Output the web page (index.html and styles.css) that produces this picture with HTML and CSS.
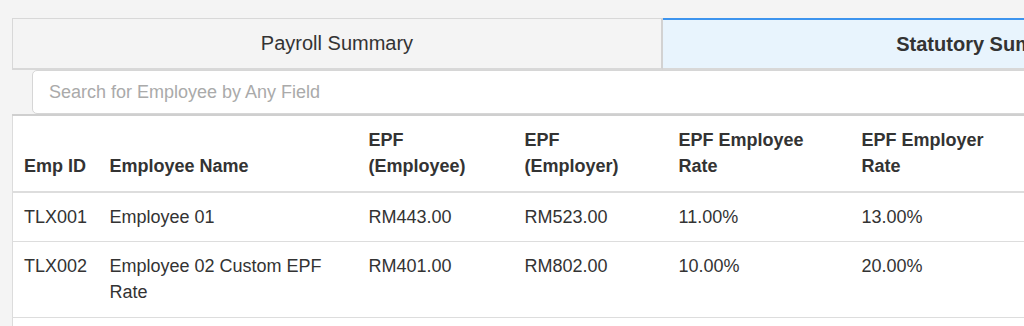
FILE: index.html
```html
<!DOCTYPE html>
<html lang="en">
<head>
    <meta charset="UTF-8">
    <meta name="viewport" content="width=device-width, initial-scale=1.0">
    <title>Payroll Reports</title>
    <link rel="stylesheet" href="styles.css">
</head>
<body>

    <!-- Report Tabs -->
    <div class="report">
        <div class="tabs">
            <div class="tab">Payroll Summary</div>
            <div class="tab active">Statutory Summary</div>
        </div>

        <!-- Employee Search -->
        <div class="search-row">
            <input class="search" type="text" placeholder="Search for Employee by Any Field">
        </div>

        <!-- Statutory Table -->
        <table class="statutory">
            <colgroup>
                <col class="col-id">
                <col class="col-name">
                <col class="col-epf">
                <col class="col-epf2">
                <col class="col-rate">
                <col class="col-rate2">
            </colgroup>
            <thead>
                <tr>
                    <th>Emp ID</th>
                    <th>Employee Name</th>
                    <th>EPF (Employee)</th>
                    <th>EPF (Employer)</th>
                    <th>EPF Employee Rate</th>
                    <th>EPF Employer Rate</th>
                </tr>
            </thead>
            <tbody>
                <tr>
                    <td>TLX001</td>
                    <td>Employee 01</td>
                    <td>RM443.00</td>
                    <td>RM523.00</td>
                    <td>11.00%</td>
                    <td>13.00%</td>
                </tr>
                <tr>
                    <td>TLX002</td>
                    <td>Employee 02 Custom EPF Rate</td>
                    <td>RM401.00</td>
                    <td>RM802.00</td>
                    <td>10.00%</td>
                    <td>20.00%</td>
                </tr>
            </tbody>
            <tfoot>
                <tr>
                    <td></td>
                    <td></td>
                    <td></td>
                    <td></td>
                    <td></td>
                    <td></td>
                </tr>
            </tfoot>
        </table>
    </div>

</body>
</html>
```

FILE: styles.css
```css
body {
    background-color: #f4f4f4;
    font-family: "Liberation Sans", Arial, Helvetica, sans-serif;
    color: #333;
    margin: 0;
    padding: 18px 0 0 12px;
    overflow: hidden;
}
.report {
    width: 1302px;
}
.tabs {
    display: flex;
}
.tab {
    box-sizing: border-box;
    width: 651px;
    height: 52px;
    display: flex;
    align-items: center;
    justify-content: center;
    font-size: 20px;
    background-color: #f4f4f4;
    border-top: 1px solid #d8d8d8;
    border-bottom: 2px solid #d8d8d8;
}
.tab:first-child {
    border-left: 1px solid #d8d8d8;
    border-right: 2px solid #d2d2d2;
}
.tab.active {
    background-color: #e8f4fd;
    border-top: 2px solid #3d94ee;
    font-weight: bold;
}
.search-row {
    padding-left: 20px;
}
.search {
    box-sizing: border-box;
    display: block;
    width: 100%;
    height: 44px;
    padding: 0 16px;
    font-family: inherit;
    font-size: 18px;
    color: #333;
    background-color: #fff;
    border: 1px solid #d6d6d6;
    border-radius: 5px;
    outline: none;
}
.search::placeholder {
    color: #aaa;
}
.statutory {
    width: 100%;
    table-layout: fixed;
    border-collapse: collapse;
    background-color: #fff;
    border-top: 2px solid #cfcfcf;
    border-left: 1px solid #dcdcdc;
    font-size: 18px;
    line-height: 26px;
}
.col-id { width: 86px; }
.col-name { width: 259px; }
.col-epf { width: 156px; }
.col-epf2 { width: 154px; }
.col-rate { width: 183px; }
.col-rate2 { width: 464px; }
.statutory th,
.statutory td {
    text-align: left;
    vertical-align: top;
    padding: 11px 11px 11.5px;
}
.statutory th {
    vertical-align: bottom;
    font-weight: bold;
    border-bottom: 2px solid #dddddd;
}
.statutory th:last-child {
    padding-right: 320px;
}
.statutory td {
    border-bottom: 1px solid #dddddd;
}
.statutory tfoot td {
    height: 26px;
    border-bottom: none;
}
```
